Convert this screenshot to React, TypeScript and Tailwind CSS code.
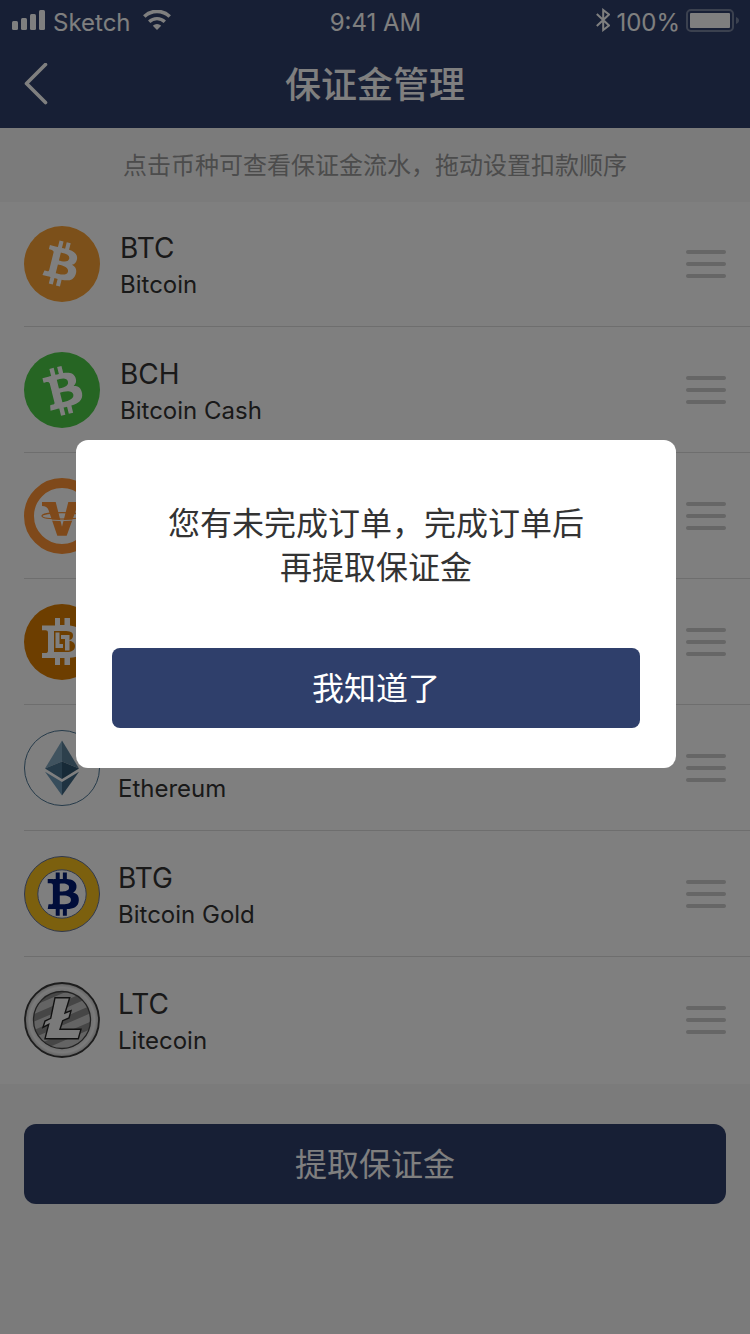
import type { ReactNode } from "react";

const BITCOIN_B =
  "M23.189 14.02c.314-2.096-1.283-3.223-3.465-3.975l.708-2.84-1.728-.43-.69 2.765c-.454-.114-.92-.22-1.385-.326l.695-2.783L15.596 6l-.708 2.839c-.376-.086-.746-.17-1.104-.26l.002-.009-2.384-.595-.46 1.846s1.283.294 1.256.312c.7.175.826.638.805 1.006l-.806 3.235c.048.012.11.03.18.057l-.183-.045-1.13 4.532c-.086.212-.303.531-.793.41.018.025-1.256-.313-1.256-.313l-.858 1.978 2.25.561c.418.105.828.215 1.231.318l-.715 2.872 1.727.43.708-2.84c.472.127.93.245 1.378.357l-.706 2.828 1.728.43.715-2.866c2.948.558 5.164.333 6.097-2.333.752-2.146-.037-3.385-1.588-4.192 1.13-.26 1.98-1.003 2.207-2.538zm-3.95 5.538c-.533 2.147-4.148.986-5.32.695l.95-3.805c1.172.293 4.929.872 4.37 3.11zm.535-5.569c-.487 1.953-3.495.96-4.47.717l.86-3.45c.975.243 4.118.696 3.61 2.733z";

function Icon({ children }: { children: ReactNode }) {
  return (
    <svg viewBox="0 0 76 76" className="size-[76px] shrink-0" aria-hidden="true">
      {children}
    </svg>
  );
}

function BtcIcon() {
  return (
    <Icon>
      <circle cx="38" cy="38" r="38" fill="#f9a034" />
      <path d={BITCOIN_B} fill="#fff" transform="translate(36.500 37.500) scale(2.3) translate(-16 -16)" />
    </Icon>
  );
}

function BchIcon() {
  return (
    <Icon>
      <circle cx="38" cy="38" r="38" fill="#4cca47" />
      <path d={BITCOIN_B} fill="#fff" transform="translate(38 38.5) rotate(-28) scale(2.5) translate(-16 -16)" />
    </Icon>
  );
}

function VIcon() {
  return (
    <Icon>
      <circle cx="38" cy="38" r="33" fill="#fff" stroke="#ff9334" strokeWidth="10" />
      <path
        d="M18 24H31.700L38 48.700 44.300 24H58V28H56.500L52 32 42.700 57.700H33.300L24.500 32Q23 28 18 28z"
        fill="#ff9334"
      />
      <path d="M58 38c0 2-9 3-20 3s-20-1-20-3 9-3.300 20-3.300 20 1.300 20 3.300z" fill="none" stroke="#ff9334" strokeWidth="1.200" />
      <path d="M25 42q13 1.300 26 0" fill="none" stroke="#fff" strokeWidth="1" />
    </Icon>
  );
}

function LightningIcon() {
  return (
    <Icon>
      <circle cx="38" cy="38" r="38" fill="#db7c00" />
      <path
        d="M31 14h5v7h4.500v-7H46v7.500c7 .8 11 4 11 8.500 0 3.500-1.800 6-5 7.300 4 1.200 6.500 4 6.500 7.700 0 5.500-4.500 8.400-12.500 8.800V61h-5.500v-7H36v7h-5v-7H18v-5h3.500c1.600 0 2.500-.6 2.500-2.500V29c0-2-.9-2.700-2.500-2.700H18V21.500h13z"
        fill="#fff"
      />
      <path d="M30 27h10c6 0 9 1 9 4.500S46.500 36 44 36.500c4 .5 7 2 7 5.500 0 4-3 6-9 6H30z" fill="#db7c00" />
      <path d="M31.500 28.500h4V40h3.500v4h-7.500zM37 31h8.500v15.500H41V35h-4z" fill="#fff" />
    </Icon>
  );
}

function EthIcon() {
  return (
    <Icon>
      <circle cx="38" cy="38" r="37.500" fill="#fff" stroke="#4b7593" strokeWidth="1" />
      <path d="M38 10.500 21 38.500 38 31.500z" fill="#81a6bf" />
      <path d="M38 10.500 55 38.500 38 31.500z" fill="#5b8099" />
      <path d="M21 38.500 38 31.500V49z" fill="#4a7490" />
      <path d="M55 38.500 38 31.500V49z" fill="#2f546e" />
      <path d="M21 41.800 38 52v13.500z" fill="#6f9ab8" />
      <path d="M55 41.800 38 52v13.500z" fill="#3f6682" />
    </Icon>
  );
}

function BtgIcon() {
  return (
    <Icon>
      <circle cx="38" cy="38" r="37.500" fill="#f9c01c" stroke="#62729c" strokeWidth="1" />
      <circle cx="38" cy="38" r="24.200" fill="#fff" stroke="#62729c" strokeWidth="1" />
      <path d={BITCOIN_B} fill="#001a75" transform="translate(38 38) rotate(-14) scale(2.230) translate(-16 -16)" />
    </Icon>
  );
}

function LtcIcon() {
  return (
    <Icon>
      <defs>
        <clipPath id="ltc-face">
          <circle cx="38" cy="38" r="28.500" />
        </clipPath>
        <radialGradient id="ltc-rim">
          <stop offset="0.760" stopColor="#dedede" />
          <stop offset="0.880" stopColor="#f6f6f6" />
          <stop offset="1" stopColor="#c0c0c0" />
        </radialGradient>
      </defs>
      <circle cx="38" cy="38" r="37" fill="url(#ltc-rim)" stroke="#3a3a3a" strokeWidth="1.800" />
      <g clipPath="url(#ltc-face)">
        <circle cx="38" cy="38" r="29" fill="#c9c9c9" />
        <path
          d="M5 22 70-6M5 38 70 10M5 54 70 26M5 70 70 42M5 86 70 58"
          fill="none"
          stroke="#8c8c8c"
          strokeWidth="7"
        />
      </g>
      <circle cx="38" cy="38" r="28.500" fill="none" stroke="#444" strokeWidth="1.300" />
      <path
        d="M31 15.700h14.700L41 31l6-2.300-2 7.300-6.300 2.700-2.700 8.600h21l-2.700 9.400H21l3.700-14.400-5.700 3 2-6.300 5.700-2.700z"
        fill="#f5f5f5"
        stroke="#222"
        strokeWidth="1.400"
      />
    </Icon>
  );
}

type Coin = { id: string; code?: string; name?: string; icon: ReactNode };

const coins: Coin[] = [
  { id: "btc", code: "BTC", name: "Bitcoin", icon: <BtcIcon /> },
  { id: "bch", code: "BCH", name: "Bitcoin Cash", icon: <BchIcon /> },
  { id: "v", icon: <VIcon /> },
  { id: "lightning", icon: <LightningIcon /> },
  { id: "eth", code: "ETH", name: "Ethereum", icon: <EthIcon /> },
  { id: "btg", code: "BTG", name: "Bitcoin Gold", icon: <BtgIcon /> },
  { id: "ltc", code: "LTC", name: "Litecoin", icon: <LtcIcon /> },
];

function StatusBar() {
  return (
    <div className="grid h-10 grid-cols-[1fr_auto_1fr] items-start pt-2 pr-[11px] pl-3 text-2xl leading-[30px]">
      <div className="flex items-start">
        <svg viewBox="0 0 33 20" className="mt-0.5 h-5 w-[33px]" fill="#fff" aria-hidden="true">
          <rect y="11" width="6" height="9" rx="1.500" />
          <rect x="9" y="8" width="6" height="12" rx="1.500" />
          <rect x="18" y="4" width="6" height="16" rx="1.500" />
          <rect x="27" width="6" height="20" rx="1.500" />
        </svg>
        <span className="ml-2">Sketch</span>
        <svg viewBox="0 0 28 20" className="mt-0.5 ml-3 h-5 w-7" aria-hidden="true">
          <path d="M1.300 6.500a18.300 18.300 0 0 1 25.400 0" fill="none" stroke="#fff" strokeWidth="3.600" />
          <path d="M6.200 11.700a11.300 11.300 0 0 1 15.600 0" fill="none" stroke="#fff" strokeWidth="3.400" />
          <path d="M14 20l-4.200-4.200a6 6 0 0 1 8.400 0z" fill="#fff" />
        </svg>
      </div>
      <span>9:41 AM</span>
      <div className="flex items-start justify-end">
        <svg viewBox="0 0 14 24" className="h-6 w-3.5" fill="none" stroke="#fff" strokeWidth="2" aria-hidden="true">
          <path d="M.8 6 13 17.500 7.200 22V2L13 6.500.8 18" />
        </svg>
        <span className="mx-1.5">100%</span>
        <svg viewBox="0 0 53 23" className="mt-px h-[23px] w-[53px]" aria-hidden="true">
          <rect x="1" y="1" width="46" height="21" rx="4" fill="none" stroke="#fff" strokeWidth="2" opacity="0.350" />
          <rect x="4" y="4" width="40" height="15" rx="1" fill="#fff" />
          <path d="M50 8c2 .8 3 2 3 3.500S52 14.200 50 15z" fill="#fff" opacity="0.350" />
        </svg>
      </div>
    </div>
  );
}

export default function App() {
  return (
    <div className="min-h-screen bg-[#f7f7f7] font-['Inter','Noto_Sans_CJK_SC',sans-serif] text-[#333]">
      <header className="bg-[#2f3f6b] text-white">
        <StatusBar />
        <div className="grid h-[88px] grid-cols-[1fr_auto_1fr] items-center px-6">
          <a href="#back" aria-label="返回">
            <svg viewBox="0 0 24 42" className="h-[42px] w-6" fill="none" stroke="#fff" strokeWidth="3.600" strokeLinecap="round" strokeLinejoin="round" aria-hidden="true">
              <path d="M21.500 1.500 2.500 20.500l19 19" />
            </svg>
          </a>
          <h1 className="pt-0.5 text-4xl font-medium">保证金管理</h1>
        </div>
      </header>

      <main>
        <p className="flex h-[74px] items-center justify-center pt-0.5 text-2xl text-[#999]">
          点击币种可查看保证金流水，拖动设置扣款顺序
        </p>

        <ul className="bg-white pb-px pl-6">
          {coins.map((coin) => (
            <li
              key={coin.id}
              className="group flex items-center justify-between border-b border-[#dcdcdc] pt-[25px] pr-6 pb-6 first:pt-6 last:border-transparent"
            >
              <a
                href={`#${coin.id}`}
                aria-label={coin.code ?? coin.id}
                className="flex items-end gap-5 group-nth-[n+5]:gap-[18px]"
              >
                {coin.icon}
                {coin.code && (
                  <span className="flex flex-col">
                    <span className="text-[28px] leading-10">{coin.code}</span>
                    <span className="text-2xl leading-[34px]">{coin.name}</span>
                  </span>
                )}
              </a>
              <button type="button" aria-label="拖动" className="flex w-10 flex-col gap-2">
                <span className="h-1 rounded-full bg-[#ccc]" />
                <span className="h-1 rounded-full bg-[#ccc]" />
                <span className="h-1 rounded-full bg-[#ccc]" />
              </button>
            </li>
          ))}
        </ul>

        <div className="px-6 pt-10 pb-10">
          <button type="button" className="h-20 w-full rounded-xl bg-[#2f3f6b] pt-0.5 text-[32px] text-white">
            提取保证金
          </button>
        </div>
      </main>

      <div className="fixed inset-0 bg-black/50 pt-[440px] pr-[74px] pl-[76px]">
        <div
          role="dialog"
          aria-modal="true"
          aria-labelledby="dialog-message"
          className="flex flex-col gap-[58px] rounded-xl bg-white px-9 pt-[62px] pb-10"
        >
          <p id="dialog-message" className="text-center text-[32px] leading-[44px]">
            您有未完成订单，完成订单后
            <br />
            再提取保证金
          </p>
          <button type="button" className="h-20 rounded-lg bg-[#2f3f6b] pt-0.5 text-[32px] text-white">
            我知道了
          </button>
        </div>
      </div>
    </div>
  );
}
